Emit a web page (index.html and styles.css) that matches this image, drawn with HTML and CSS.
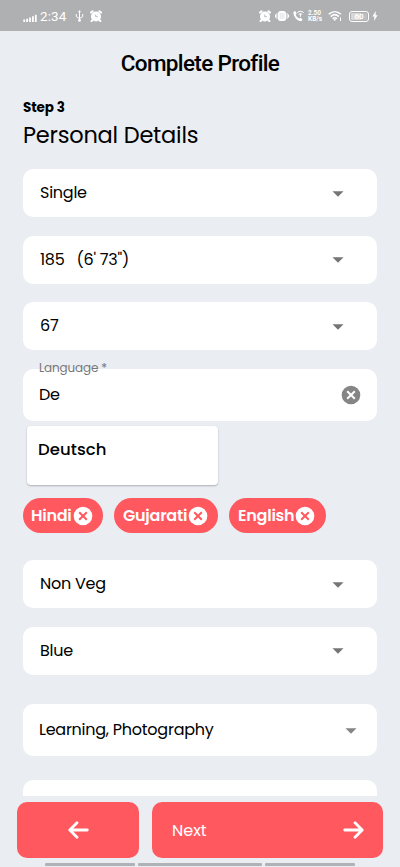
FILE: index.html
```html
<!DOCTYPE html>
<html lang="en">
<head>
<meta charset="utf-8">
<meta name="viewport" content="width=device-width, initial-scale=1">
<title>Complete Profile</title>
<link rel="stylesheet" href="styles.css">
</head>
<body>
<svg width="0" height="0" class="defs">
  <symbol id="alarm" viewBox="0 0 12 12"><circle cx="6" cy="6.5" r="5" fill="#fff"/><path d="M1 2.600 2.600 1.200M11 2.600 9.400 1.200M2.4 10.2l-.8 1M9.6 10.2l.8 1" stroke="#fff" stroke-width="2" stroke-linecap="round"/><path d="M5.700 4.500v2.200h2.200" fill="none" stroke="#aeafb0" stroke-width=".8"/></symbol>
  <symbol id="caret" viewBox="0 0 12 6"><path d="M.5.3h11L6 5.700z" fill="currentColor"/></symbol>
  <symbol id="clear" viewBox="0 0 20 20"><circle cx="10" cy="10" r="9.3" fill="currentColor"/><path d="m6.200 6.200 7.600 7.600m0-7.600-7.600 7.600" stroke="var(--cross)" stroke-width="2" /></symbol>
</svg>
<header class="status">
  <svg class="signal" width="14" height="8" viewBox="0 0 14 8"><path d="M1.2 5.6V8M4.1 4.7V8M7 3.6V8M9.9 2.2V8M12.8.8V8" stroke="#fff" stroke-width="1.8"/></svg>
  <span class="clock">2:34</span>
  <svg class="usb" width="9" height="12" viewBox="0 0 9 12"><path d="M4.5 1.5v9M1.3 4v2.6l3.2 2 3.2-2V4" fill="none" stroke="#fff" stroke-width="1"/><path d="m4.5 0 1.5 2.3H3z" fill="#fff"/><circle cx="4.5" cy="10.4" r="1.4" fill="#fff"/></svg>
  <svg class="alarm" width="12" height="12"><use href="#alarm"/></svg>
  <span class="spacer"></span>
  <svg width="12" height="12"><use href="#alarm"/></svg>
  <svg class="vibrate" width="14" height="12" viewBox="0 0 14 12"><rect x="3" y="1" width="8" height="10" rx="2.5" fill="#fff"/><path d="M1.9 3.2v5.6M.5 4.5v3M12.1 3.2v5.6M13.5 4.5v3" stroke="#fff"/><path d="M4.5 4h5M4.5 6h5M4.5 8h5" stroke="#c6c7c8" stroke-width=".6"/></svg>
  <svg class="call" width="11" height="12" viewBox="0 0 11 12"><path d="M.5 1.8 2.2.9l1.5 2.5-1 1.2c.5 1.8 1.8 3.2 3.5 4l1.4-.9 2 1.8-1 1.6C4.600 11.600-.2 6.500.5 1.800z" fill="#fff"/><path d="M4.300 2.600c2-1.700 4.300-1.700 6.200 0M5.700 4.400c1.100-.9 2.300-.9 3.400 0M7.400 4.500v2.200" fill="none" stroke="#fff" stroke-width="1.1"/></svg>
  <span class="speed"><b>2.50</b><b>KB/s</b></span>
  <svg class="wifi" width="14" height="12" viewBox="0 0 14 12"><path d="M.7 4.300c3.700-3.500 8.500-3.500 12.200 0M2.700 6.600c2.500-2.400 5.700-2.400 8.200 0M4.600 8.700c1.400-1.200 3-1.200 4.400 0" fill="none" stroke="#fff" stroke-width="1.5"/><path d="M5.300 9.500c1-.7 2-.7 3 0L6.800 11z" fill="#fff"/><path d="M12.500 7.500V11" stroke="#fff"/></svg>
  <span class="battery"><i>60</i></span>
  <svg class="bolt" width="6" height="10" viewBox="0 0 6 10"><path d="M3.800 0 .4 5.600h2L2 10l3.600-5.700h-2z" fill="#fff"/></svg>
</header>
<main class="page">
  <h1>Complete Profile</h1>
  <p class="step">Step 3</p>
  <h2>Personal Details</h2>
  <form class="form">
    <div class="field"><span>Single</span><svg class="caret"><use href="#caret"/></svg></div>
    <div class="field"><span>185 &nbsp; (6' 73")</span><svg class="caret"><use href="#caret"/></svg></div>
    <div class="field"><span>67</span><svg class="caret"><use href="#caret"/></svg></div>
    <div class="field tall language"><label>Language *</label><span>De</span><svg class="clear"><use href="#clear"/></svg></div>
    <div class="suggestion"><span>Deutsch</span></div>
    <div class="chips">
      <div class="chip"><span>Hindi</span><svg class="clear"><use href="#clear"/></svg></div>
      <div class="chip"><span>Gujarati</span><svg class="clear"><use href="#clear"/></svg></div>
      <div class="chip"><span>English</span><svg class="clear"><use href="#clear"/></svg></div>
    </div>
    <div class="field"><span>Non Veg</span><svg class="caret"><use href="#caret"/></svg></div>
    <div class="field"><span>Blue</span><svg class="caret"><use href="#caret"/></svg></div>
    <div class="field tall hobbies"><span>Learning, Photography</span><svg class="caret"><use href="#caret"/></svg></div>
    <div class="field tall partial"></div>
  </form>
</main>
<footer class="actions">
  <button class="back" aria-label="Back"><svg width="21" height="18" viewBox="0 0 21 18"><path d="M19.300 9H2M9 1.700 1.800 9 9 16.300" fill="none" stroke="#fff" stroke-width="2.800" stroke-linecap="round" stroke-linejoin="round"/></svg></button>
  <button class="next"><span>Next</span><svg width="21" height="18" viewBox="0 0 21 18"><path d="M1.700 9H19M12 1.700 19.200 9 12 16.300" fill="none" stroke="#fff" stroke-width="2.800" stroke-linecap="round" stroke-linejoin="round"/></svg></button>
</footer>
<div class="gesture"><i></i><i></i><i></i></div>
</body>
</html>
```
FILE: styles.css
```css
* { box-sizing: border-box; }
html, body { margin: 0; height: 867px; overflow: hidden; }
body {
  width: 400px;
  display: flex;
  flex-direction: column;
  background: #eaedf2;
  color: #000;
  font-family: Poppins, Inter, sans-serif;
  font-size: 16px;
}
svg { display: block; flex: none; }
.defs { position: absolute; }
h1, h2, p { margin: 0; }
span, label { white-space: nowrap; }

.status {
  height: 31px;
  flex: none;
  display: flex;
  align-items: center;
  padding: 1px 22px 0 23px;
  background: #afb0b1;
  color: #fff;
  font-family: Roboto, sans-serif;
}
.signal { margin-top: 4px; }
.clock { margin-left: 3px; font-size: 13.500px; letter-spacing: .1px; }
.usb { margin-left: 9px; }
.alarm { margin-left: 6px; }
.spacer { flex: 1; }
.vibrate { margin-left: 4px; }
.call { margin-left: 4px; }
.speed {
  width: 14px;
  margin-left: 4px;
  display: flex;
  flex-direction: column;
  font-size: 6.500px;
  line-height: 6px;
}
.wifi { margin-left: 6px; }
.battery {
  width: 20px;
  height: 11px;
  margin-left: 7px;
  padding: 1px;
  border: 1px solid #fff;
  border-radius: 3px;
}
.battery i {
  display: block;
  height: 7px;
  border-radius: 1px;
  background: linear-gradient(90deg, #d8d8d8 65%, #bebfc0 65%);
  color: #fff;
  font: bold 8px/7px Roboto, sans-serif;
  text-align: center;
}
.bolt { margin-left: 3px; }

.page {
  height: 765px;
  flex: none;
  overflow: hidden;
  padding: 0 23px;
}
h1 {
  margin-top: 18px;
  font: 500 22.500px/28px Roboto, sans-serif;
  letter-spacing: -.65px;
  text-align: center;
}
.step {
  margin-top: 22px;
  font-size: 13.500px;
  font-weight: 700;
  line-height: 18px;
  letter-spacing: -.1px;
}
h2 {
  margin-top: 3px;
  font-size: 22.500px;
  font-weight: 400;
  line-height: 30px;
  letter-spacing: -.22px;
}
.form { margin-top: 19px; }
.field {
  height: 48px;
  margin-bottom: 18.500px;
  padding: 0 33.500px 1px 17px;
  display: flex;
  align-items: center;
  justify-content: space-between;
  border-radius: 10px;
  background: #fff;
  letter-spacing: -.25px;
}
.caret { width: 12px; height: 6px; margin-top: 2px; color: #757575; }
.clear { width: 20px; height: 20px; }
.tall { height: 52px; padding: 0 16px; }
.language {
  position: relative;
  margin-bottom: 5.500px;
}
.language label {
  position: absolute;
  left: 16px;
  top: -9.500px;
  color: #777;
  font-size: 12px;
  line-height: 18px;
  letter-spacing: -.15px;
}
.language span { margin-top: -1px; }
.language .clear { color: #858585; --cross: #fff; }
.suggestion {
  width: 191px;
  height: 59px;
  margin-left: 4px;
  padding: 12px 11px;
  border-radius: 4px;
  background: #fff;
  box-shadow: 0 1px 2px #0004;
  line-height: 24px;
  font-size: 16.500px;
  font-weight: 500;
  letter-spacing: .05px;
}
.chips { display: flex; gap: 11px; margin: 13px 0 27px; }
.chip {
  width: 80px;
  height: 35px;
  padding: 0 10px 0 8px;
  display: flex;
  align-items: center;
  justify-content: space-between;
  border-radius: 18px;
  background: #ff585f;
  color: #fff;
  font-weight: 600;
  letter-spacing: -.25px;
}
.chip:nth-child(2) { width: 104px; padding-left: 9px; }
.chip:nth-child(3) { width: 97px; padding: 0 11px 0 9px; }
.chip .clear { --cross: #ff585f; }
.hobbies { margin-top: 29px; margin-bottom: 24px; }
.hobbies .caret { margin-right: 4px; color: #858585; }
.partial { height: 17px; margin: 0; border-radius: 10px 10px 0 0; }

.actions {
  display: flex;
  gap: 13px;
  flex: none;
  margin-top: 6px;
  padding: 0 17px;
}
button {
  height: 56px;
  border: 0;
  border-radius: 10px;
  background: #ff585f;
  color: #fff;
  font: inherit;
  display: flex;
  align-items: center;
}
.back { width: 122px; padding: 0; justify-content: center; }
.next { flex: 1; padding: 0 19px 0 20px; justify-content: space-between; }
.next span { font-size: 16px; }
.gesture {
  display: grid;
  grid-template-columns: 90px 124px 90px;
  gap: 3px;
  justify-content: center;
  margin-top: 5px;
}
.gesture i { height: 2.500px; border-radius: 1px; background: #b0b2b5; }
```
